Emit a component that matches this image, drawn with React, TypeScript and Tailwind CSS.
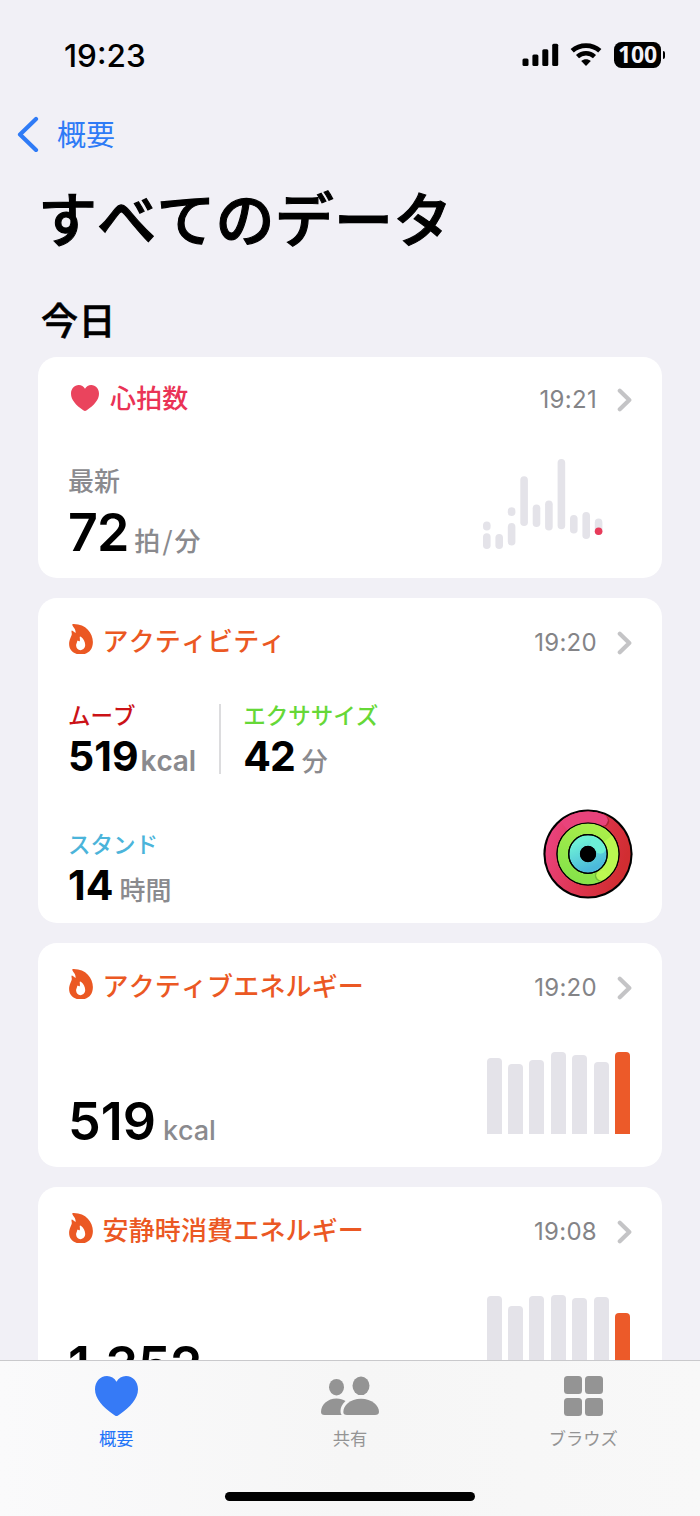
import type { ReactNode } from 'react';
import clsx from 'clsx';

const HEART_BARS = [
  { x: 0, top: 62.5, bottom: 71.5 },
  { x: 0, top: 74.3, bottom: 90 },
  { x: 12.4, top: 75, bottom: 90 },
  { x: 24.8, top: 48.2, bottom: 57 },
  { x: 24.8, top: 64, bottom: 86.5 },
  { x: 37.3, top: 17.3, bottom: 67 },
  { x: 49.7, top: 45.5, bottom: 68 },
  { x: 62.1, top: 41.5, bottom: 71.5 },
  { x: 74.6, top: 0, bottom: 70.3 },
  { x: 87, top: 56, bottom: 74.5 },
  { x: 99.4, top: 53, bottom: 80 },
  { x: 111.8, top: 59.6, bottom: 76 },
];

const ACTIVE_ENERGY = [76, 70, 74, 82, 79, 72, 82];
const RESTING_ENERGY = [82, 72, 82, 83, 80, 81, 65.5];

function HeartIcon({ className }: { className: string }) {
  return (
    <svg viewBox="0 0 42 39" preserveAspectRatio="none" className={className} fill="currentColor">
      <path d="M21 39C20.300 39 19.400 38.500 18.400 37.800C7.300 30.200 0 22 0 13C0 5.400 5 0 11.700 0C15.700 0 19 2.200 21 5.600C23 2.200 26.300 0 30.300 0C37 0 42 5.400 42 13C42 22 34.700 30.200 23.600 37.800C22.600 38.500 21.700 39 21 39Z" />
    </svg>
  );
}

function FlameIcon() {
  return (
    <svg viewBox="0 0 71 91" className="-mt-1.5 mr-[10px] ml-[0.500px] h-[30.500px] w-6 shrink-0" fill="currentColor">
      <path
        fillRule="evenodd"
        d="M10 1C8 3 11 7 15 12C18 16 19.500 21 19.500 27C17 25 12 20.500 8.500 19.500C6 19.500 7.500 25 8 29C9 36 0 44 0 60C0 79 14 91 35 91C57 91 71 77 71 54C71 27 50 0 14 0C12 0 11 0 10 1ZM32 38C31 40 33 45 32 51C30 53 28 50 26 49C23.500 50 24 55 21.500 60C19 70 25 78 34 78C42 78 48 71 48 63C48 54 43 43 36 39C34 37 33 37 32 38Z"
      />
    </svg>
  );
}

function ChevronRight() {
  return (
    <svg viewBox="0 0 15 24" className="mt-0.5 -mr-px ml-5 h-6 w-[15px] shrink-0" fill="none">
      <path d="M2.800 2.700L12.300 12L2.800 21.300" stroke="#c4c4c6" strokeWidth="4.200" strokeLinecap="round" strokeLinejoin="round" />
    </svg>
  );
}

function StatusBar() {
  return (
    <div className="flex h-[110px] items-center justify-between pr-[35px] pl-[64px]">
      <span className="mt-0.5 font-['Inter'] text-[31.500px] font-medium">19:23</span>
      <div className="flex items-center">
        <svg viewBox="0 0 37 24" className="mr-[11px] h-6 w-[37px]">
          <rect x="0.500" y="15.500" width="6" height="7.500" rx="1.500" />
          <rect x="10.400" y="11.500" width="6" height="11.500" rx="1.500" />
          <rect x="20.300" y="6.200" width="6" height="16.800" rx="1.500" />
          <rect x="30.200" y="0.700" width="6" height="22.300" rx="1.500" />
        </svg>
        <svg viewBox="0 0 32 24" className="mr-3 h-6 w-8" fill="none" stroke="#000">
          <path d="M2.200 7.800C9.900 0.900 22.100 0.900 29.800 7.800" strokeWidth="4.800" />
          <path d="M7.500 13.600C12.300 9.200 19.700 9.200 24.500 13.600" strokeWidth="4.500" />
          <path d="M11.200 18.100C14 15.700 18 15.700 20.800 18.100L16 23Z" fill="#000" stroke="none" />
        </svg>
        <div className="flex h-[26px] w-[47px] items-center justify-center rounded-[7.500px] bg-black pb-px font-['Noto_Sans'] text-[23px] leading-none font-bold tracking-[-0.200px] text-[#f2f1f7]">
          100
        </div>
        <div className="ml-[1.500px] h-2 w-[2.500px] rounded-r-full bg-black" />
      </div>
    </div>
  );
}

type CardProps = {
  title: string;
  time: string;
  icon: ReactNode;
  color: string;
  className: string;
  headerHeight?: string;
  children: ReactNode;
};

function Card({ title, time, icon, color, className, headerHeight = 'h-[88px]', children }: CardProps) {
  return (
    <section className={clsx('flex shrink-0 flex-col rounded-[19px] bg-white pr-[31px] pl-[30px]', className)}>
      <div className={clsx('flex shrink-0 items-center', headerHeight, color)}>
        {icon}
        <h3 className="-mt-1 text-[26px] leading-none font-medium tracking-[0.150px]">{title}</h3>
        <span className="mt-0.5 ml-auto font-['Inter'] text-2xl tracking-[0.300px] text-[#848487]">{time}</span>
        <ChevronRight />
      </div>
      {children}
    </section>
  );
}

type MetricProps = {
  label: string;
  color: string;
  value: string;
  unit: string;
  valueClass?: string;
  unitClass: string;
};

function Metric({ label, color, value, unit, valueClass, unitClass }: MetricProps) {
  return (
    <div>
      <div className={clsx('text-[22.500px] leading-6 font-medium', color)}>{label}</div>
      <div className="mt-1 flex h-[52px] items-baseline leading-[52px]">
        <span className={clsx("font-['Inter'] text-[41px] font-bold", valueClass)}>{value}</span>
        <span className={clsx('text-[#8a8a8e]', unitClass)}>{unit}</span>
      </div>
    </div>
  );
}

type ReadingProps = {
  value: string;
  unit: ReactNode;
  valueClass?: string;
  unitClass: string;
};

function Reading({ value, unit, valueClass, unitClass }: ReadingProps) {
  return (
    <div className="flex h-[60px] items-baseline leading-[60px]">
      <span className={clsx("font-['Inter'] text-[52px] font-semibold", valueClass)}>{value}</span>
      <span className={clsx('font-medium text-[#8a8a8e]', unitClass)}>{unit}</span>
    </div>
  );
}

function HeartChart() {
  return (
    <svg viewBox="0 0 120 91" className="mt-[18px] mr-7 h-[91px] w-[120px]">
      {HEART_BARS.map((b, i) => (
        <rect key={i} x={b.x} y={b.top} width="7.600" height={b.bottom - b.top} rx="3.800" fill="#e4e3e9" />
      ))}
      <circle cx="115.600" cy="72.300" r="3.800" fill="#e83b5a" />
    </svg>
  );
}

function BarChart({ data }: { data: number[] }) {
  return (
    <div className="mr-px flex h-[82px] items-end gap-[6.400px]">
      {data.map((h, i) => (
        <div
          key={i}
          className={clsx('w-[15px] rounded-t-[4px]', i === data.length - 1 ? 'bg-[#ec5a29]' : 'bg-[#e4e3e9]')}
          style={{ height: h }}
        />
      ))}
    </div>
  );
}

function ActivityRings() {
  return (
    <svg viewBox="0 0 90 90" className="-mt-[22px] -mr-0.5 h-[90px] w-[90px]" fill="none">
      <defs>
        <linearGradient id="move" x1="0" y1="0.300" x2="1" y2="0.600">
          <stop offset="0" stopColor="#e9427a" />
          <stop offset="0.500" stopColor="#dd3550" />
          <stop offset="1" stopColor="#d12d31" />
        </linearGradient>
        <linearGradient id="exercise" x1="0.200" y1="1" x2="0.700" y2="0">
          <stop offset="0" stopColor="#86e34a" />
          <stop offset="1" stopColor="#a9ee4a" />
        </linearGradient>
        <linearGradient id="stand" x1="0.300" y1="0" x2="0.700" y2="1">
          <stop offset="0" stopColor="#6df0d6" />
          <stop offset="1" stopColor="#4bb9db" />
        </linearGradient>
      </defs>
      <circle cx="45" cy="45" r="44.600" fill="#000" />
      <circle cx="45" cy="45" r="37" stroke="url(#move)" strokeWidth="11" />
      <circle cx="60.800" cy="12.200" r="5.400" fill="#8f1c2c" opacity="0.600" />
      <path d="M21 16.900A37 37 0 0 1 59.300 10.900" stroke="#e8437b" strokeWidth="11" />
      <circle cx="59.300" cy="11.300" r="5.500" fill="#e8437b" />
      <circle cx="45" cy="45" r="25.300" stroke="url(#exercise)" strokeWidth="10.800" />
      <path d="M65 29.600A25.300 25.300 0 0 1 58.500 66.400" stroke="#baf750" strokeWidth="10.800" />
      <circle cx="57.500" cy="66.800" r="5.600" fill="#68a52f" opacity="0.600" />
      <circle cx="58.600" cy="66.300" r="5.400" fill="#bdf952" />
      <circle cx="45" cy="45" r="13.400" stroke="url(#stand)" strokeWidth="10.500" />
      <path d="M48 31.900A13.400 13.400 0 0 1 57.400 40" stroke="#6cefd5" strokeWidth="10" />
      <circle cx="57.400" cy="39.800" r="5" fill="#6cefd5" />
      <circle cx="45" cy="45" r="31" stroke="#000" strokeWidth="1.200" />
      <circle cx="45" cy="45" r="19.300" stroke="#000" strokeWidth="1.200" />
      <circle cx="45" cy="45" r="8" fill="#000" />
    </svg>
  );
}

function TabBar() {
  return (
    <nav className="absolute inset-x-0 bottom-0 h-[156px] border-t border-[#c9c9cc] bg-linear-to-r from-[#fafafb] via-[#f6f6f6] to-[#f8f8f8]">
      <div className="grid grid-cols-3 pt-[15px] text-[17.300px] leading-6 text-[#949494]">
        <div className="flex flex-col items-center text-[#1f74f8]">
          <HeartIcon className="h-10 w-[43px] text-[#367af6]" />
          <span className="mt-2.5 pr-px">概要</span>
        </div>
        <div className="flex flex-col items-center">
          <svg viewBox="0 0 58 40" className="h-10 w-[58px]" fill="currentColor">
            <ellipse cx="15.500" cy="11.200" rx="7.500" ry="8.300" />
            <path d="M3.500 39C1.200 39 0 38 0 36C0 29 6.500 22.600 15.500 22.600C19 22.600 22 23.500 24.500 25C21 28 19.500 32 19.500 35C19.500 37 20 38.300 20.700 39Z" />
            <ellipse cx="40" cy="9.800" rx="8.500" ry="9.300" />
            <path d="M26 39C23.500 39 22.300 38 22.300 36C22.300 29.500 29 22.700 40 22.700C51 22.700 58 29.500 58 36C58 38 56.500 39 54 39Z" />
          </svg>
          <span className="mt-2.5">共有</span>
        </div>
        <div className="flex flex-col items-center">
          <div className="grid h-10 grid-cols-2 content-center gap-[3.500px]">
            <div className="size-[18px] rounded-[3.500px] bg-current" />
            <div className="size-[18px] rounded-[3.500px] bg-current" />
            <div className="size-[18px] rounded-[3.500px] bg-current" />
            <div className="size-[18px] rounded-[3.500px] bg-current" />
          </div>
          <span className="mt-2.5">ブラウズ</span>
        </div>
      </div>
      <div className="mx-auto mt-[42px] h-[9px] w-[250px] rounded-full bg-black" />
    </nav>
  );
}

export default function App() {
  return (
    <div className="relative h-[1516px] w-[700px] overflow-hidden bg-[#f1f0f6] font-['Noto_Sans_CJK_JP',sans-serif] text-black [font-kerning:none]">
      <StatusBar />
      <div className="flex h-12 items-center pl-4 text-[#2f7bf6]">
        <svg viewBox="0 0 24 36" className="mr-[17px] h-9 w-6" fill="none">
          <path d="M20 3L4 18.500L20 34" stroke="currentColor" strokeWidth="4.200" strokeLinecap="round" strokeLinejoin="round" />
        </svg>
        <span className="-mt-0.5 text-[29px] leading-none">概要</span>
      </div>
      <h1 className="mt-[23px] pl-[38px] text-[59px] leading-[72px] font-medium tracking-[0.200px] [-webkit-text-stroke:1.100px]">すべてのデータ</h1>
      <h2 className="mt-[46px] pl-[41px] text-[37px] leading-10 font-medium tracking-[0.500px] [-webkit-text-stroke:0.600px]">今日</h2>
      <main className="mt-[18px] flex flex-col gap-5 px-[38px]">
        <Card
          title="心拍数"
          time="19:21"
          color="text-[#ea3356]"
          icon={<HeartIcon className="-mt-0.5 mr-[11px] ml-[3px] h-[26px] w-7 text-[#ea445d]" />}
          className="h-[221px]"
          headerHeight="h-[84px]"
        >
          <div className="flex items-start justify-between">
            <div className="pt-[25px]">
              <div className="text-[26px] leading-7 font-medium text-[#8a8a8e]">最新</div>
              <div className="mt-[9px]">
                <Reading
                  value="72"
                  unit={<>拍<span className="mx-0.5">/</span>分</>}
                  valueClass="tracking-[-1px]"
                  unitClass="ml-1.5 text-[26px] leading-none"
                />
              </div>
            </div>
            <HeartChart />
          </div>
        </Card>
        <Card title="アクティビティ" time="19:20" color="text-[#eb5823]" icon={<FlameIcon />} className="h-[325px]">
          <div className="mt-4 flex">
            <Metric
              label="ムーブ"
              color="text-[#cb1217]"
              value="519"
              unit="kcal"
              unitClass="ml-0.5 font-['Inter'] text-[28px] font-semibold"
            />
            <div className="mr-[22px] ml-[23px] mt-0.5 h-[70px] w-0.5 bg-[#dcdcde]" />
            <Metric
              label="エクササイズ"
              color="text-[#66d837]"
              value="42"
              unit="分"
              valueClass="tracking-[-1px]"
              unitClass="ml-[7px] text-[26px] leading-none font-medium"
            />
          </div>
          <div className="mt-[49px] flex items-start justify-between">
            <Metric
              label="スタンド"
              color="text-[#4bb4da]"
              value="14"
              unit="時間"
              unitClass="ml-1.5 text-[26px] leading-none font-medium"
            />
            <ActivityRings />
          </div>
        </Card>
        <Card title="アクティブエネルギー" time="19:20" color="text-[#eb5823]" icon={<FlameIcon />} className="h-[224px]">
          <div className="mt-[21px] flex items-start justify-between">
            <div className="mt-10">
              <Reading value="519" unit="kcal" unitClass="ml-[7px] font-['Inter'] text-[27px]" />
            </div>
            <BarChart data={ACTIVE_ENERGY} />
          </div>
        </Card>
        <Card title="安静時消費エネルギー" time="19:08" color="text-[#eb5823]" icon={<FlameIcon />} className="h-[224px]">
          <div className="mt-[21px] flex items-start justify-between">
            <div className="mt-10">
              <Reading
                value="1,352"
                unit="kcal"
                valueClass="tracking-[-0.600px]"
                unitClass="ml-[7px] font-['Inter'] text-[27px]"
              />
            </div>
            <BarChart data={RESTING_ENERGY} />
          </div>
        </Card>
      </main>
      <TabBar />
    </div>
  );
}
